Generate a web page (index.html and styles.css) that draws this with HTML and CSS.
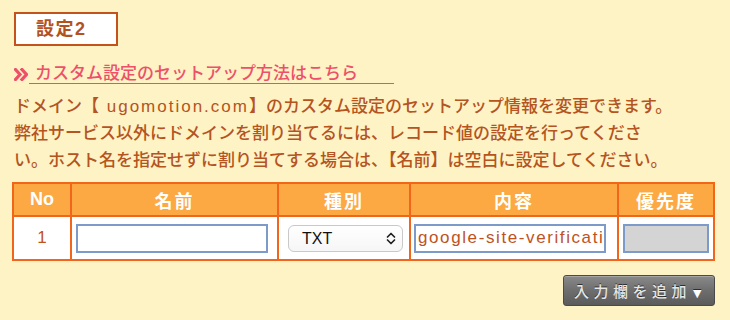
FILE: index.html
```html
<!DOCTYPE html>
<html lang="ja">
<head>
<meta charset="utf-8">
<title>設定2</title>
<link rel="stylesheet" href="styles.css">
</head>
<body>
<div class="page">
  <div class="heading">設定2</div>
  <div class="link-row">
    <svg class="raquo" width="14" height="13" viewBox="0 0 14 13"><polyline points="1.5,1.5 6,6.5 1.5,11.5" /><polyline points="8,1.5 12.5,6.5 8,11.5" /></svg>
    <a class="setup-link" href="#">カスタム設定のセットアップ方法はこちら</a>
  </div>
  <p class="desc">ドメイン【 <span class="latin">ugomotion.com</span>】のカスタム設定のセットアップ情報を変更できます。<br>弊社サービス以外にドメインを割り当てるには、レコード値の設定を行ってくださ<br>い。ホスト名を指定せずに割り当てする場合は、【名前】は空白に設定してください。</p>
  <table class="records">
    <thead>
      <tr>
        <th class="c-no">No</th>
        <th class="c-name">名前</th>
        <th class="c-type">種別</th>
        <th class="c-content">内容</th>
        <th class="c-prio">優先度</th>
      </tr>
    </thead>
    <tbody>
      <tr>
        <td class="c-no num">1</td>
        <td class="c-name"><input class="field name-field" type="text" value=""></td>
        <td class="c-type">
          <div class="select-wrap">
            <select class="type-select"><option>TXT</option></select>
            <svg class="chev" width="12" height="13" viewBox="0 0 12 13"><polyline points="2.5,5 6,1.5 9.5,5" /><polyline points="2.5,8 6,11.5 9.5,8" /></svg>
          </div>
        </td>
        <td class="c-content"><input class="field content-field" type="text" value="google-site-verification"></td>
        <td class="c-prio"><input class="field prio-field" type="text" value="" disabled></td>
      </tr>
    </tbody>
  </table>
  <div class="actions">
    <button class="add-btn" type="button">入力欄を追加<span class="tri">▼</span></button>
  </div>
</div>
</body>
</html>
```

FILE: styles.css
```css
html, body {
  margin: 0;
  padding: 0;
  background: #fdf3c5;
}
body {
  font-family: "Liberation Sans", "Noto Sans CJK JP", sans-serif;
  color: #b5531f;
}
.page {
  padding: 12px 0 0 12px;
}
.heading {
  box-sizing: border-box;
  width: 104px;
  height: 34px;
  margin-left: 2px;
  border: 2px solid #c4521d;
  background: #ffffff;
  color: #b4521e;
  font-weight: bold;
  font-size: 18px;
  line-height: 30px;
  padding-left: 20px;
  letter-spacing: 1.5px;
}
.link-row {
  display: flex;
  align-items: center;
  height: 24px;
  margin-top: 16px;
  padding-left: 2px;
}
.raquo {
  display: block;
  margin-top: 1px;
}
.raquo polyline {
  fill: none;
  stroke: #ee5069;
  stroke-width: 3.2;
  stroke-linecap: square;
}
.setup-link {
  display: inline-block;
  margin-left: 1px;
  padding: 0 36px 0 6px;
  line-height: 18px;
  font-size: 17px;
  font-weight: 500;
  color: #ee5069;
  text-decoration: none;
  border-bottom: 1px solid #ee5069;
}
.desc {
  margin: 7px 0 0 2px;
  font-size: 17px;
  font-weight: 500;
  line-height: 27px;
  color: #b5541f;
  white-space: nowrap;
}
.latin {
  letter-spacing: 2px;
  margin-left: 3px;
}
.records {
  margin-top: 8px;
  border-collapse: separate;
  border-spacing: 0;
  table-layout: fixed;
  border-top: 2px solid #f2661c;
  border-left: 2px solid #f2661c;
}
.records th, .records td {
  box-sizing: border-box;
  border-right: 2px solid #f2661c;
  border-bottom: 2px solid #f2661c;
  padding: 0;
}
.records th {
  height: 33px;
  background: #fca944;
  color: #ffffff;
  font-weight: bold;
  font-size: 18px;
  letter-spacing: 2px;
  text-align: center;
  vertical-align: middle;
}
.records th.c-no {
  font-size: 18px;
  letter-spacing: 0;
}
.records td {
  height: 44px;
  background: #ffffff;
  vertical-align: middle;
  padding-left: 4px;
}
.c-no { width: 58px; }
.c-name { width: 207px; }
.c-type { width: 132px; }
.c-content { width: 208px; }
.c-prio { width: 96px; }
.records td.num {
  padding-left: 0;
  text-align: center;
  font-size: 17px;
  color: #c0521e;
}
.records td.c-content {
  padding-left: 3px;
}
.field {
  display: block;
  box-sizing: border-box;
  height: 29px;
  margin: 0;
  border: 2px solid #7d9bc8;
  border-radius: 0;
  background: #ffffff;
  outline: none;
  font-family: "Liberation Sans", sans-serif;
  padding: 0 2px;
}
.name-field { width: 192px; }
.content-field {
  width: 192px;
  font-size: 17px;
  letter-spacing: 1.6px;
  color: #c0521e;
  padding: 0 2px;
}
.prio-field {
  width: 86px;
  background: #d4d4d4;
}
.select-wrap {
  position: relative;
  width: 115px;
  height: 27px;
  margin-left: 5px;
}
.type-select {
  -webkit-appearance: none;
  appearance: none;
  box-sizing: border-box;
  width: 115px;
  height: 27px;
  margin: 0;
  border: 1px solid #c9c9c9;
  border-radius: 6px;
  background: linear-gradient(#ffffff, #f6f6f6);
  font-family: "Liberation Sans", sans-serif;
  font-size: 16px;
  color: #111111;
  padding: 0 0 0 13px;
  outline: none;
}
.chev {
  position: absolute;
  right: 6px;
  top: 7px;
  pointer-events: none;
}
.chev polyline {
  fill: none;
  stroke: #222222;
  stroke-width: 1.7;
  stroke-linecap: round;
  stroke-linejoin: round;
}
.actions {
  display: flex;
  justify-content: flex-end;
  width: 703px;
  margin-top: 14px;
}
.add-btn {
  box-sizing: border-box;
  width: 152px;
  height: 31px;
  margin: 0;
  padding: 0 0 0 10px;
  border: 1px solid #4a4a4a;
  border-radius: 3px;
  background: linear-gradient(#8a8a8a, #6e6e6e 50%, #5b5b5b);
  box-shadow: inset 0 1px 0 rgba(255,255,255,0.25);
  color: #e6e6e6;
  font-family: "Noto Sans CJK JP", sans-serif;
  font-size: 15px;
  font-weight: 500;
  letter-spacing: 4.5px;
  text-align: left;
  text-shadow: 0 -1px 0 rgba(0,0,0,0.6);
}
.tri {
  font-family: "DejaVu Sans", sans-serif;
  font-size: 11px;
  letter-spacing: 0;
  color: #ffffff;
  margin-left: 2px;
}
```
